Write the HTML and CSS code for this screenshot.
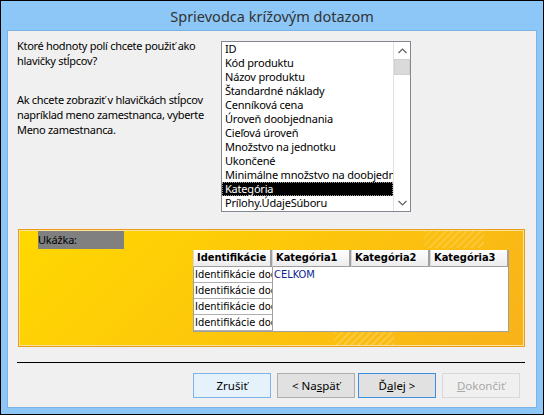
FILE: index.html
```html
<!DOCTYPE html>
<html lang="sk">
  <head>
    <meta charset="UTF-8" />
    <title>Sprievodca krížovým dotazom</title>
    <link rel="stylesheet" href="styles.css">
  </head>
  <body>
    <div class="window">
      <div class="titlebar">Sprievodca krížovým dotazom</div>

      <div class="client">
        <div class="top">
          <div class="intro">
            <p>Ktoré hodnoty polí chcete použiť ako<br />hlavičky stĺpcov?</p>
            <p class="hint">
              Ak chcete zobraziť v hlavičkách stĺpcov<br />napríklad meno
              zamestnanca, vyberte<br />Meno zamestnanca.
            </p>
          </div>

          <div class="listbox">
            <ul class="items">
              <li>ID</li>
              <li>Kód produktu</li>
              <li>Názov produktu</li>
              <li>Štandardné náklady</li>
              <li>Cenníková cena</li>
              <li>Úroveň doobjednania</li>
              <li>Cieľová úroveň</li>
              <li>Množstvo na jednotku</li>
              <li>Ukončené</li>
              <li>Minimálne množstvo na doobjednanie</li>
              <li class="selected">Kategória</li>
              <li>Prílohy.ÚdajeSúboru</li>
              <li>Prílohy.NázovSúboru</li>
            </ul>
            <div class="scrollbar">
              <div class="sb-btn">
                <svg width="9" height="6" viewBox="0 0 9 6"><path d="M0.5 5 L4.5 1 L8.5 5" fill="none" stroke="#606060" stroke-width="1.2" /></svg>
              </div>
              <div class="sb-thumb"></div>
              <div class="sb-track"></div>
              <div class="sb-btn">
                <svg width="9" height="6" viewBox="0 0 9 6"><path d="M0.5 1 L4.5 5 L8.5 1" fill="none" stroke="#606060" stroke-width="1.2" /></svg>
              </div>
            </div>
          </div>
        </div>

        <!-- Ukážka krížového dotazu -->
        <div class="preview">
          <div class="preview-label">Ukážka:</div>
          <div class="grid">
            <div class="grid-head">
              <div class="head-cell">Identifikácie</div>
              <div class="head-cell">Kategória1</div>
              <div class="head-cell">Kategória2</div>
              <div class="head-cell">Kategória3</div>
            </div>
            <div class="grid-body">
              <div class="row-col">
                <div class="row-cell">Identifikácie dodávateľa</div>
                <div class="row-cell">Identifikácie dodávateľa</div>
                <div class="row-cell">Identifikácie dodávateľa</div>
                <div class="row-cell">Identifikácie dodávateľa</div>
              </div>
              <div class="values">CELKOM</div>
            </div>
          </div>
        </div>

        <div class="separator"></div>

        <div class="buttons">
          <button class="btn hover">Zrušiť</button>
          <button class="btn">&lt; Na<u>s</u>päť</button>
          <button class="btn default">Ď<u>a</u>lej &gt;</button>
          <button class="btn" disabled><u>D</u>okončiť</button>
        </div>
      </div>
    </div>
  </body>
</html>
```

FILE: styles.css
```css
* {
  box-sizing: border-box;
  margin: 0;
  padding: 0;
}

body {
  font-family: "Noto Sans", sans-serif;
  font-size: 11px;
  letter-spacing: -0.2px;
  color: #000;
  background: #000;
}

.window {
  width: 544px;
  height: 415px;
  border: 1px solid #000;
  background: #8cc7f7;
  padding: 0 6px 6px 6px;
  display: flex;
  flex-direction: column;
}

.titlebar {
  height: 29px;
  text-align: center;
  font-size: 14.5px;
  letter-spacing: 0;
  line-height: 30px;
  color: #333;
}

.client {
  flex: 1;
  background: #f0f0f0;
  border: 1px solid #7db2e6;
  display: flex;
  flex-direction: column;
}

.top {
  display: flex;
  margin-top: 10px;
  height: 171px;
}

.intro {
  width: 213px;
  margin-top: -3px;
  padding-left: 9px;
  white-space: nowrap;
  line-height: 15px;
  letter-spacing: -0.3px;
}

.intro .hint {
  margin-top: 24px;
}

.listbox {
  width: 190px;
  height: 171px;
  background: #fff;
  border: 1px solid #828790;
  display: flex;
  overflow: hidden;
}

.items {
  list-style: none;
  flex: 1;
  overflow: hidden;
  white-space: nowrap;
}

.items li {
  height: 14px;
  line-height: 14px;
  padding-left: 3px;
  overflow: hidden;
}

.items li.selected {
  background: #000;
  color: #fff;
  outline: 1px dotted #9a9a9a;
  outline-offset: -1px;
}

.scrollbar {
  width: 17px;
  display: flex;
  flex-direction: column;
  border-left: 1px solid #e2e2e2;
  background: #fff;
}

.sb-btn {
  height: 17px;
  display: flex;
  align-items: center;
  justify-content: center;
}

.sb-thumb {
  height: 16px;
  background: #dadada;
  border: 1px solid #d0d0d0;
}

.sb-track {
  flex: 1;
}

.preview {
  margin: 17px 0 0 10px;
  width: 507px;
  height: 118px;
  border: 1px solid #f09a1a;
  box-shadow: inset 0 0 0 1px #fbe49a;
  padding: 1px;
  background:
    repeating-linear-gradient(135deg, rgba(255, 255, 255, 0.18) 0 2px, transparent 2px 5px) 315px 95px / 60px 20px no-repeat,
    repeating-linear-gradient(135deg, rgba(255, 255, 255, 0.15) 0 2px, transparent 2px 5px) 405px 0 / 60px 18px no-repeat,
    linear-gradient(135deg, #ffd800 0%, #fdc80a 45%, #f8b21a 100%);
}

.preview-label {
  margin-left: 18px;
  width: 86px;
  height: 18px;
  line-height: 17px;
  background: #808080;
  color: #000;
}

.grid {
  margin: 1px 0 0 173px;
  width: 316px;
  font-family: "DejaVu Sans Condensed", "DejaVu Sans", sans-serif;
  font-size: 11px;
  letter-spacing: 0;
}

.grid-head {
  display: flex;
  height: 17px;
}

.head-cell {
  width: 79px;
  padding-left: 3px;
  line-height: 16px;
  font-weight: bold;
  background: linear-gradient(#ffffff, #ececec);
  border-style: solid;
  border-width: 0 2px 1px 1px;
  border-color: #fff #a0a0a0 #a0a0a0 #d8d8d8;
  white-space: nowrap;
  overflow: hidden;
}

.grid-body {
  display: flex;
  height: 65px;
}

.row-col {
  width: 79px;
  border-left: 1px solid #a0a0a0;
  border-bottom: 1px solid #a0a0a0;
}

.row-cell {
  height: 16px;
  line-height: 15px;
  padding-left: 1px;
  background: #fff;
  border-bottom: 1px solid #b0b0b0;
  white-space: nowrap;
  overflow: hidden;
}

.values {
  flex: 1;
  background: #fff;
  border: 1px solid #a0a0a0;
  border-top: 0;
  color: #0c2690;
  padding-left: 1px;
  line-height: 15px;
}

.separator {
  margin: 15px 0 0 9px;
  width: 508px;
  height: 1px;
  background: #000;
}

.buttons {
  display: flex;
  gap: 6px;
  margin: 10px 0 0 185px;
}

.btn {
  width: 78px;
  height: 25px;
  font-family: "Noto Sans", sans-serif;
  font-size: 11.5px;
  color: #000;
  background: #e1e1e1;
  border: 1px solid #adadad;
}

.btn.hover {
  background: #e5f1fb;
  border-color: #7eb4ea;
}

.btn.default {
  border-color: #3c8fe0;
  margin-left: -3px;
}

.btn:disabled {
  background: #f0f0f0;
  border-color: #d9d9d9;
  color: #a8a8a8;
}
```
